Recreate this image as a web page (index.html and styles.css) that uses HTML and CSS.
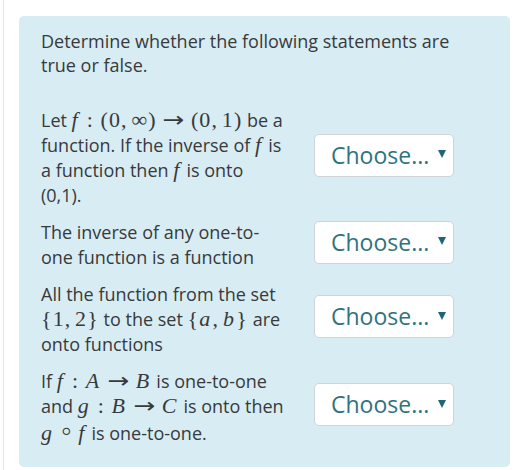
FILE: index.html
```html
<!DOCTYPE html>
<html>
<head>
<meta charset="utf-8">
<link rel="stylesheet" href="styles.css">
</head>
<body>
<div class="page">
  <div class="formulation">
    <p class="intro">Determine whether the following statements are true or false.</p>
    <div class="rows">
      <div class="row">
        <div class="text">Let <span class="m"><i>f</i><span class="rel">:</span>(0,<span class="th"></span>∞)<span class="arr">→</span>(0,<span class="th"></span>1)</span> be a function. If the inverse of <span class="m"><i>f</i></span> is a function then <span class="m"><i>f</i></span> is onto<br>(0,1).</div>
        <div class="select"><span class="label">Choose...</span><span class="arrow"></span></div>
      </div>
      <div class="row">
        <div class="text">The inverse of any one-to-one function is a function</div>
        <div class="select"><span class="label">Choose...</span><span class="arrow"></span></div>
      </div>
      <div class="row">
        <div class="text">All the function from the set <span class="m">{1,<span class="th"></span>2}</span> to the set <span class="m">{<i>a</i>,<span class="th"></span><i>b</i>}</span> are onto functions</div>
        <div class="select"><span class="label">Choose...</span><span class="arrow"></span></div>
      </div>
      <div class="row">
        <div class="text">If <span class="m"><i>f</i><span class="rel">:</span><i>A</i><span class="arr">→</span><i>B</i></span> is one-to-one and <span class="m"><i>g</i><span class="rel">:</span><i>B</i><span class="arr">→</span><i>C</i></span> is onto then <span class="m"><i>g</i><span class="op">∘</span><i>f</i></span> is one-to-one.</div>
        <div class="select"><span class="label">Choose...</span><span class="arrow"></span></div>
      </div>
    </div>
  </div>
</div>
</body>
</html>
```
FILE: styles.css
```css
html, body {
  margin: 0;
  padding: 0;
  background: #ffffff;
}
body {
  font-family: "Open Sans", "DejaVu Sans", sans-serif;
  color: #373a3c;
}
.page {
  margin-left: 3px;
  border-left: 1px solid #e4e4e4;
  min-height: 470px;
  padding-top: 16px;
  box-sizing: border-box;
}
.formulation {
  margin-left: 15px;
  width: 491px;
  height: 451px;
  box-sizing: border-box;
  background: #d8ecf3;
  border-radius: 5px;
  padding: 13px 20px 0 22px;
}
.intro {
  margin: 0;
  font-size: 18px;
  line-height: 24px;
  width: 420px;
}
.rows {
  margin-top: 31px;
  display: flex;
  flex-direction: column;
  gap: 12px;
}
.row {
  display: flex;
  align-items: center;
  gap: 25px;
}
.text {
  width: 248px;
  flex: none;
  font-size: 18px;
  line-height: 25px;
}
.m {
  font-family: "Liberation Serif", "DejaVu Serif", serif;
  font-size: 22px;
  line-height: 1;
  white-space: nowrap;
  letter-spacing: 0.05em;
}
.m i {
  font-style: italic;
  padding-right: 0.06em;
}
.th {
  display: inline-block;
  width: 0.17em;
}
.rel {
  display: inline-block;
  margin: 0 0.3em;
}
.arr {
  display: inline-block;
  width: 1em;
  text-align: center;
  font-family: "DejaVu Sans", sans-serif;
  font-size: 0.95em;
  transform: scaleX(1.25);
  margin: 0 0.32em;
  letter-spacing: 0;
}
.op {
  display: inline-block;
  font-family: "DejaVu Sans", sans-serif;
  font-size: 1.25em;
  line-height: 0.8;
  margin: 0 0.12em;
  letter-spacing: 0;
  font-weight: 300;
}
.select {
  width: 140px;
  height: 43px;
  flex: none;
  box-sizing: border-box;
  background: #ffffff;
  border: 1px solid #cfd4d6;
  border-radius: 5px;
  display: flex;
  align-items: center;
  padding: 0 7px 0 16px;
  margin-top: -6px;
}
.label {
  flex: 1;
  color: #2f7380;
  font-size: 23px;
  line-height: 1;
}
.arrow {
  width: 0;
  height: 0;
  border-left: 4.5px solid transparent;
  border-right: 4.5px solid transparent;
  border-top: 8px solid #1f6575;
  margin-top: -2px;
}
```
